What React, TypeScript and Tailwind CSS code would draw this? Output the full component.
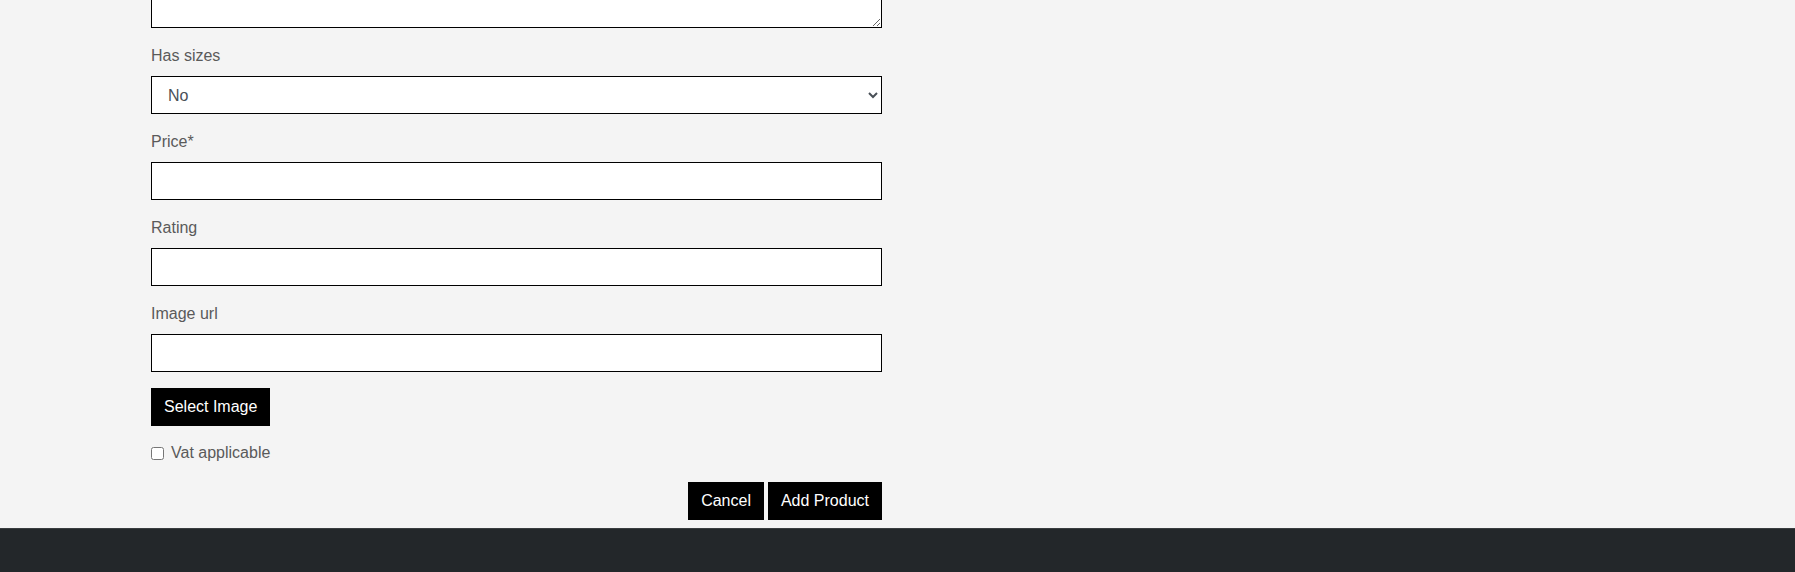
import React from "react";

const labelCls = "block mb-2 text-[16px] leading-6 text-[#5a5a5a]";
const inputCls =
  "block w-full h-[38px] px-3 bg-white border border-black rounded-none text-[16px] text-[#495057] outline-none";
const btnCls = "h-[38px] px-[13px] bg-black text-white text-[16px] leading-6 rounded-none";

export default function App() {
  return (
    <div
      className="min-h-[572px] bg-[#f4f4f4] flex flex-col"
      style={{ fontFamily: '"Liberation Sans", Arial, sans-serif' }}
    >
      <main className="pl-[151px]">
        <form className="w-[731px] flex flex-col" onSubmit={(e) => e.preventDefault()}>
          <div className="h-[28px] overflow-hidden flex flex-col justify-end">
            <textarea className="block w-full h-[90px] shrink-0 px-3 py-1.5 bg-white border border-black rounded-none text-[16px] outline-none" />
          </div>

          <div className="mt-4">
            <label className={labelCls}>Has sizes</label>
            <select className={inputCls + " pl-3 pr-2"} defaultValue="No">
              <option>No</option>
              <option>Yes</option>
            </select>
          </div>

          <div className="mt-4">
            <label className={labelCls}>Price*</label>
            <input type="text" className={inputCls} />
          </div>

          <div className="mt-4">
            <label className={labelCls}>Rating</label>
            <input type="text" className={inputCls} />
          </div>

          <div className="mt-4">
            <label className={labelCls}>Image url</label>
            <input type="text" className={inputCls} />
          </div>

          <div className="mt-4">
            <button type="button" className={btnCls}>
              Select Image
            </button>
          </div>

          <div className="mt-[15px] flex items-center h-6">
            <input type="checkbox" className="w-[13px] h-[13px] m-0 mr-[7px]" />
            <label className="text-[16px] leading-6 text-[#5a5a5a]">Vat applicable</label>
          </div>

          <div className="mt-[17px] mb-2 flex justify-end gap-1">
            <button type="button" className={btnCls}>
              Cancel
            </button>
            <button type="submit" className={btnCls}>
              Add Product
            </button>
          </div>
        </form>
      </main>
      <footer className="flex-1 bg-[#23272a] border-t border-[#3a3d40] min-h-[44px]" />
    </div>
  );
}
